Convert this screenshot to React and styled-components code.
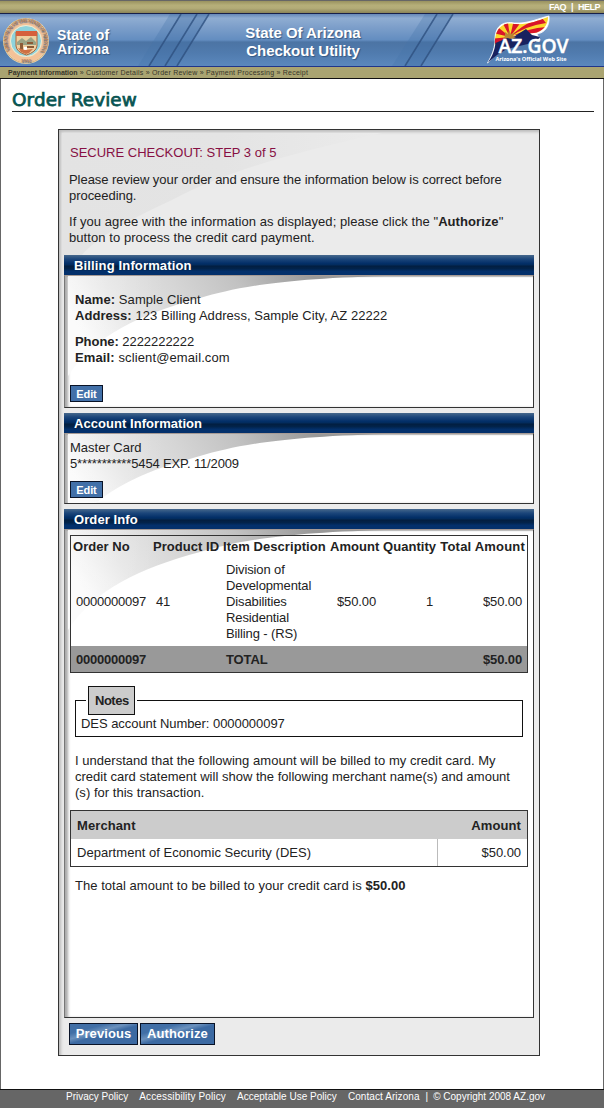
import React from "react";
import styled, { createGlobalStyle } from "styled-components";

const Global = createGlobalStyle`
  * { box-sizing: border-box; }
  body { margin: 0; background: #fff; }
`;

const Page = styled.div`
  width: 604px;
  height: 1108px;
  display: flex;
  flex-direction: column;
  font: 13px/16px "Liberation Sans", Arial, sans-serif;
  letter-spacing: -0.05px;
  color: #222;
  overflow: hidden;
`;

const TopBar = styled.nav`
  height: 14px;
  flex: none;
  border-top: 1px solid #666;
  border-bottom: 1px solid #17204a;
  background: linear-gradient(#99925f, #b5ae79 35%, #b3ac78 60%, #8a8458);
  display: flex;
  justify-content: flex-end;
  align-items: center;
  gap: 5px;
  padding: 0 4px 0 0;
  color: #fff;
  font: bold 9px/12px "Liberation Sans", Arial, sans-serif;
  letter-spacing: -0.5px;
`;

const Header = styled.header`
  position: relative;
  height: 53px;
  flex: none;
  display: flex;
  border-bottom: 1px solid #20358a;
  background: linear-gradient(#6688b8 0, #8fadd2 8%, #7d9fca 25%, #638dc0 50%, #4c74a4 54%, #507bae 75%, #5b88bd 100%);
  color: #fff;
  font-weight: bold;
  text-shadow: 1px 1px 1px #345782;
`;

const Stripes = styled.svg`
  position: absolute;
  inset: 0;
`;

const Seal = styled.svg`
  position: relative;
  margin: 3px 0 0 2px;
  flex: none;
`;

const StateName = styled.div`
  position: relative;
  width: 131px;
  margin: 14px 0 0 7px;
  font-size: 14px;
  line-height: 14px;
  letter-spacing: 0.1px;
`;

const AppName = styled.div`
  position: relative;
  width: 230px;
  margin-top: 10px;
  font-size: 15px;
  line-height: 18px;
  text-align: center;
`;

const Logo = styled.svg`
  position: relative;
  margin-left: 66px;
  flex: none;
  text-shadow: none;
`;

const Crumbs = styled.div`
  height: 12px;
  flex: none;
  padding-left: 8px;
  border-bottom: 1px solid #111;
  background: #aaa471;
  color: #37352a;
  font-size: 7px;
  line-height: 12px;
  letter-spacing: 0.23px;
  white-space: pre;
  b { letter-spacing: 0; }
`;

const Main = styled.main`
  height: 1010px;
  flex: none;
  border: solid #666;
  border-width: 0 1px;
  padding: 8px 9px 0 11px;
`;

const Title = styled.h1`
  margin: 0;
  height: 25px;
  border-bottom: 1px solid #222;
  color: #075451;
  font: 18.4px/26px "DejaVu Sans", Verdana, sans-serif;
  letter-spacing: 0.1px;
  -webkit-text-stroke: 0.75px #075451;
`;

const Panel = styled.section`
  position: relative;
  width: 482px;
  height: 927px;
  margin: 17px 0 0 46px;
  border: 1px solid #333;
  padding: 15px 5px 0;
  background: #ebebeb;
  box-shadow: inset 3px 3px 3px -1px #bbb;
`;

const PanelSwoosh = styled.svg`
  position: absolute;
  left: 3px;
  top: 3px;
`;

const Intro = styled.div`
  position: relative;
  height: 110px;
  padding-left: 5px;
  p { margin: 0 0 10px; }
`;

const Step = styled.div`
  height: 27px;
  padding-left: 1px;
  letter-spacing: 0;
  color: #870f43;
`;

const Line = styled.span`
  letter-spacing: ${(p) => p.$spacing}px;
  white-space: nowrap;
`;

const Section = styled.section`
  position: relative;
  height: ${(p) => p.$height}px;
  margin-bottom: 5px;
  display: flex;
  flex-direction: column;
`;

const Bar = styled.h2`
  margin: 0;
  height: 20px;
  flex: none;
  padding-left: 10px;
  color: #fff;
  font: bold 13px/22px "Liberation Sans", Arial, sans-serif;
  letter-spacing: ${(p) => p.$spacing || 0}px;
  background: linear-gradient(#47688c 0, #1c467b 20%, #032f68 42%, #032b5c 50%, #021e40 55%, #02234a 68%, #03306b 82%, #03306b 100%);
`;

const Body = styled.div`
  position: relative;
  flex: 1;
  border: 1px solid #333;
  border-top: 1px solid #a79b95;
  border-left-color: #777;
  background: #fff;
  padding: ${(p) => p.$pad || "0"};
  &:before {
    content: "";
    position: absolute;
    inset: 0;
    box-shadow: inset 4px 0 3px -1px #aaa, inset 0 2px 1px -1px #bbb;
  }
`;

const Swoosh = styled.svg`
  position: absolute;
  left: 0;
  top: 0;
  max-height: 100%;
`;

const Content = styled.div`
  position: relative;
  height: 100%;
`;

const Button = styled.button`
  display: block;
  height: ${(p) => (p.$large ? 22 : 17)}px;
  width: ${(p) => p.$width}px;
  padding: 0;
  border: 1px solid #081226;
  border-radius: 0;
  background: ${(p) => (p.$large
    ? "linear-gradient(165deg, #416fa6 0 25%, #6b91bd 40%, #3b69a2 52%, #3b69a2)"
    : "#4270a8")};
  color: #fff;
  font: bold ${(p) => (p.$large ? 13 : 11)}px/${(p) => (p.$large ? 20 : 16)}px "Liberation Sans", Arial, sans-serif;
  letter-spacing: ${(p) => (p.$large ? 0.1 : -0.1)}px;
`;

const Actions = styled.div`
  display: flex;
  gap: 2px;
  padding-left: 5px;
`;

const OrderTable = styled.table`
  width: 458px;
  height: 138px;
  table-layout: fixed;
  border-collapse: separate;
  border-spacing: 0;
  border: 1px solid #333;
  th, td { padding: 0 5px; text-align: left; vertical-align: middle; white-space: nowrap; }
  th { height: 22px; padding: 0 2px; letter-spacing: 0.05px; }
  th:last-child { letter-spacing: 0.2px; }
  td { height: 88px; letter-spacing: -0.12px; }
  th:nth-child(n+4), td:nth-child(n+4) { text-align: right; }
  td:first-child { letter-spacing: -0.23px; }
  tr:last-child td { height: 26px; padding-top: 1px; background: #999; font-weight: bold; }
`;

const Notes = styled.fieldset`
  width: 448px;
  height: 51px;
  margin: 13px 0 0 5px;
  padding: 0 5px;
  border: 1px solid #111;
  min-width: 0;
  line-height: 17px;
  legend {
    height: 29px;
    width: 47px;
    margin-left: 7px;
    padding: 0 0 0 6px;
    border: 1px solid #111;
    background: #ccc;
    font-weight: bold;
    line-height: 27px;
    text-align: left;
    letter-spacing: -0.5px;
    box-shadow: -2px 0 #fff, 2px 0 #fff;
  }
`;

const Statement = styled.p`
  margin: 0 0 ${(p) => p.$below ?? 10}px;
  padding: ${(p) => p.$pad || "0"};
`;

const MerchantTable = styled.table`
  width: 458px;
  height: 57px;
  margin-top: -1px;
  table-layout: fixed;
  border-spacing: 0;
  border: 1px solid #333;
  th, td { padding: 0 6px; text-align: left; }
  th { height: 28px; padding-top: 2px; background: #ccc; letter-spacing: 0.1px; }
  td { height: 27px; letter-spacing: 0.04px; }
  th:last-child, td:last-child { text-align: right; }
  td:last-child { border-left: 1px solid #bbb; letter-spacing: -0.05px; }
`;

const Footer = styled.footer`
  height: 19px;
  flex: none;
  padding: 0 0 0 66px;
  display: flex;
  gap: 11px;
  border-top: 1px solid #111;
  background: #666;
  color: #fff;
  font-size: 10px;
  line-height: 14px;
`;

const Copyright = styled.div`
  display: flex;
  gap: 5px;
  margin-left: -5px;
  letter-spacing: 0;
`;

function StateSeal() {
  return (
    <Seal width="48" height="48" viewBox="0 0 48 48">
      <defs><path id="ring" d="M8 34 A19 19 0 1 1 40 34" /></defs>
      <circle cx="24" cy="24" r="23" fill="#e9dfb8" />
      <circle cx="24" cy="24" r="22" fill="none" stroke="#dba16c" strokeWidth="0.8" />
      <circle cx="24" cy="24" r="18.6" fill="none" stroke="#f4c298" strokeWidth="5" />
      <text fontSize="5" fill="#b87d50" fontFamily="Liberation Serif, serif" textLength="82">
        <textPath href="#ring">GREAT SEAL OF THE STATE OF ARIZONA</textPath>
      </text>
      <text x="24" y="44.5" fontSize="5" fill="#b87d50" textAnchor="middle" fontFamily="Liberation Serif, serif">1912</text>
      <circle cx="24" cy="24" r="15.5" fill="#8ed3dc" stroke="#f4ead0" />
      <path d="M14 15h21v14q-1 6-10.5 9q-10-3-10.5-9z" fill="#efd0a1" stroke="#a8653a" />
      <path d="M14 14h21v5H14z" fill="#d6603d" />
      <path d="M15 25l5-4 4 3 5-4 5 5v3H15z" fill="#9aa384" />
      <path d="M18 26h3v7h-3zM25 25h6v2h-6zM25 29h7v2h-7z" fill="#8b5b36" />
      <path d="M22 30h3v3h-3z" fill="#fff" />
      <path d="M16 31l7 2 8-1-4 4-3 1-5-2z" fill="#cf7143" />
    </Seal>
  );
}

function AzLogo() {
  return (
    <Logo width="90" height="52" viewBox="485 14 90 52">
      <defs>
        <clipPath id="flag"><path d="M496 46C495 27 505 22 515 24C529 25 538 21 549 17C549 26 543 32 535 33C526 34 519 34 511 37L498 47Z" /></clipPath>
      </defs>
      <path d="M488.5 63C493 55 495 50 496 42C495 25 505 21 515 23C529 24 540 18 550 16C551 27 545 33 538 34L541 40L510 47L498 54Z" fill="#fff" stroke="#fff" strokeWidth="0.8" />
      <g clipPath="url(#flag)">
        <path d="M490 14h65v40h-65z" fill="#fbd72b" />
        <path d="M511 37L490 47V39ZM511 37L490 32L495 24ZM511 37L501 18L508 16ZM511 37L516 15L525 18ZM511 37Q523 25 535 21L543 18L547 23Q526 26 511 37ZM511 37Q530 28 547 27L543 35Q525 31 511 37Z" fill="#d9152a" />
      </g>
      <path d="M489 62.500C494 55 495.500 50 496.500 43L508 38L516 36L527 29L533 35L541 37L537 42L508 49L498 55Z" fill="#17225f" />
      <path d="M506 32l3 2 1-4 2 4 4-2-2 4 3 1-4 2-5-1-4 1 2-3z" fill="#b98735" />
      <text x="499.5" y="52.5" textLength="70" lengthAdjust="spacingAndGlyphs" fontFamily="Open Sans, sans-serif" fontWeight="600" fontSize="20.5" fill="#fff" stroke="#fff" strokeWidth="0.4">AZ.GOV</text>
      <text x="496.5" y="60.5" textLength="71" lengthAdjust="spacingAndGlyphs" fontFamily="Open Sans, sans-serif" fontWeight="700" fontSize="6" fill="#fff">Arizona's Official Web Site</text>
    </Logo>
  );
}

function SectionSwoosh({ id }) {
  return (
    <Swoosh width="320" height="104">
      <defs>
        <linearGradient id={id} x1="230" y1="-30" x2="35" y2="88" gradientUnits="userSpaceOnUse">
          <stop offset="0" stopColor="#999" />
          <stop offset="0.3" stopColor="#c2c2c2" />
          <stop offset="0.55" stopColor="#d6d6d6" />
          <stop offset="0.8" stopColor="#e6e6e6" />
          <stop offset="1" stopColor="#fafafa" />
        </linearGradient>
        <linearGradient id={id + "Fade"} x1="0" x2="100" gradientUnits="userSpaceOnUse">
          <stop offset="0" stopColor="#fff" stopOpacity="0.3" />
          <stop offset="1" stopColor="#fff" stopOpacity="0" />
        </linearGradient>
      </defs>
      <path d="M3 0H320C210 3 170 12 135 22C75 38 30 59 3 100Z" fill={`url(#${id})`} />
      <path d="M3 0H320C210 3 170 12 135 22C75 38 30 59 3 100Z" fill={`url(#${id}Fade)`} />
    </Swoosh>
  );
}

export default function App() {
  return (
    <Page>
      <Global />
      <TopBar><span>FAQ</span><span>|</span><span>HELP</span></TopBar>
      <Header>
        <Stripes width="604" height="52" viewBox="0 0 604 52">
          <path d="M170 0H181L149 52H138ZM425 0H437L405 52H392Z" fill="#4674a8" opacity=".3" />
          <path d="M181 0H209L177 52H149ZM437 0H453L421 52H405Z" fill="#3f6ca4" opacity=".35" />
          <path d="M181 0L149 52M197 0L165 52M209 0L177 52M437 0L405 52M453 0L421 52" stroke="#2f5180" strokeWidth="1.6" opacity=".8" />
        </Stripes>
        <StateSeal />
        <StateName>State of<br />Arizona</StateName>
        <AppName>State Of Arizona<br />Checkout Utility</AppName>
        <AzLogo />
      </Header>
      <Crumbs><b>Payment Information</b> » Customer Details » Order Review » Payment Processing » Receipt</Crumbs>
      <Main>
        <Title>Order Review</Title>
        <Panel>
          <PanelSwoosh width="320" height="122" viewBox="0 0 320 122">
            <defs>
              <linearGradient id="panelShade" x1="0" y1="0" x2="1" y2="0">
                <stop offset="0" stopColor="#e3e3e3" />
                <stop offset="0.5" stopColor="#e4e4e4" />
                <stop offset="1" stopColor="#ebebeb" />
              </linearGradient>
            </defs>
            <path d="M0 0H320C230 20 165 38 110 67C60 90 35 105 20 122H0Z" fill="url(#panelShade)" />
          </PanelSwoosh>
          <Intro>
            <Step>SECURE CHECKOUT: STEP 3 of 5</Step>
            <p>Please review your order and ensure the information below is correct before<br />proceeding.</p>
            <p>
              <Line $spacing={0.06}>If you agree with the information as displayed; please click the "<b>Authorize</b>"</Line><br />
              <Line $spacing={0.07}>button to process the credit card payment.</Line>
            </p>
          </Intro>
          <Section $height={153}>
            <Bar $spacing={0.15}>Billing Information</Bar>
            <Body $pad="16px 5px 5px">
              <SectionSwoosh id="billing" />
              <Content>
                <Statement $pad="0 0 0 5px">
                  <Line $spacing={0.08}><b>Name:</b> Sample Client</Line><br />
                  <Line $spacing={0.05}><b>Address:</b> 123 Billing Address, Sample City, AZ 22222</Line>
                </Statement>
                <Statement $pad="0 0 9px 5px">
                  <b>Phone:</b> 2222222222<br />
                  <Line $spacing={0.12}><b>Email:</b> sclient@email.com</Line>
                </Statement>
                <Button $width={33}>Edit</Button>
              </Content>
            </Body>
          </Section>
          <Section $height={91}>
            <Bar $spacing={0.05}>Account Information</Bar>
            <Body $pad="6px 5px 4px">
              <SectionSwoosh id="account" />
              <Content>
                <Statement $below={9}>
                  <Line $spacing={0}>Master Card</Line><br />
                  <Line $spacing={-0.14}>5***********5454 EXP. 11/2009</Line>
                </Statement>
                <Button $width={33}>Edit</Button>
              </Content>
            </Body>
          </Section>
          <Section $height={509}>
            <Bar $spacing={0.1}>Order Info</Bar>
            <Body $pad="5px 5px 0">
              <SectionSwoosh id="order" />
              <Content>
                <OrderTable>
                  <colgroup>
                    <col width="80" /><col width="70" /><col width="107" /><col width="53" /><col width="57" /><col width="89" />
                  </colgroup>
                  <tbody>
                    <tr><th>Order No</th><th>Product ID</th><th>Item Description</th><th>Amount</th><th>Quantity</th><th>Total Amount</th></tr>
                    <tr>
                      <td>0000000097</td><td>41</td>
                      <td>Division of<br />Developmental<br />Disabilities<br />Residential<br />Billing - (RS)</td>
                      <td>$50.00</td><td>1</td><td>$50.00</td>
                    </tr>
                    <tr><td>0000000097</td><td /><td>TOTAL</td><td /><td /><td>$50.00</td></tr>
                  </tbody>
                </OrderTable>
                <Notes><legend>Notes</legend>DES account Number: 0000000097</Notes>
                <Statement $pad="16px 0 0 5px">
                  <Line $spacing={0.03}>I understand that the following amount will be billed to my credit card. My</Line><br />
                  <Line $spacing={0.01}>credit card statement will show the following merchant name(s) and amount</Line><br />
                  <Line $spacing={0.03}>(s) for this transaction.</Line>
                </Statement>
                <MerchantTable>
                  <colgroup><col width="366" /><col width="90" /></colgroup>
                  <tbody>
                    <tr><th>Merchant</th><th>Amount</th></tr>
                    <tr><td>Department of Economic Security (DES)</td><td>$50.00</td></tr>
                  </tbody>
                </MerchantTable>
                <Statement $pad="11px 0 0 5px">
                  <Line $spacing={0.04}>The total amount to be billed to your credit card is <b>$50.00</b></Line>
                </Statement>
              </Content>
            </Body>
          </Section>
          <Actions>
            <Button $large $width={69}>Previous</Button>
            <Button $large $width={75}>Authorize</Button>
          </Actions>
        </Panel>
      </Main>
      <Footer>
        <Line $spacing={0}>Privacy Policy</Line>
        <Line $spacing={0.14}>Accessibility Policy</Line>
        <Line $spacing={0.02}>Acceptable Use Policy</Line>
        <Line $spacing={0.07}>Contact Arizona</Line>
        <Copyright><span>|</span><span>© Copyright 2008 AZ.gov</span></Copyright>
      </Footer>
    </Page>
  );
}
